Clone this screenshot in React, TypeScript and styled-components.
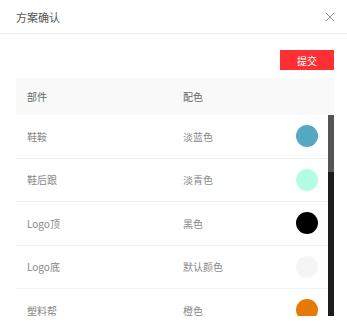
import styled, { createGlobalStyle } from 'styled-components';

// global reset, the dialog fills the page
const GlobalStyle = createGlobalStyle`
  html, body {
    margin: 0;
    padding: 0;
    background: #ffffff;
    font-family: "Noto Sans CJK SC", "Noto Sans", sans-serif;
  }
`;

type Part = { name: string; colorName: string; color: string };

const parts: Part[] = [
  { name: '鞋鞍', colorName: '淡蓝色', color: '#56a8c2' },
  { name: '鞋后跟', colorName: '淡青色', color: '#b3fde2' },
  { name: 'Logo顶', colorName: '黑色', color: '#000000' },
  { name: 'Logo底', colorName: '默认颜色', color: '#f5f5f5' },
  { name: '塑料帮', colorName: '橙色', color: '#e77a06' },
];

const Dialog = styled.div`
  width: 347px;
  height: 326px;
  background: #fff;
  display: flex;
  flex-direction: column;
  overflow: hidden;
`;

const Header = styled.div`
  height: 34px;
  border-bottom: 1px solid #f0f0f0;
  display: flex;
  align-items: center;
  justify-content: space-between;
  padding: 0 12px 0 16px;
  box-sizing: border-box;
`;

const Title = styled.div`
  font-size: 11px;
  color: #555;
`;

const Close = styled.button`
  border: none;
  background: none;
  padding: 0;
  width: 10px;
  height: 10px;
  display: flex;
  cursor: pointer;
`;

const Body = styled.div`
  padding: 16px 13px 0 16px;
  display: flex;
  flex-direction: column;
`;

const Toolbar = styled.div`
  display: flex;
  justify-content: flex-end;
  margin-bottom: 8px;
`;

const SubmitButton = styled.button`
  width: 54px;
  height: 20px;
  border: none;
  background: #ff3033;
  color: #fff;
  font-family: inherit;
  font-size: 10px;
  padding: 0;
  cursor: pointer;
`;

const HeadRow = styled.div`
  display: grid;
  grid-template-columns: 156px 156px 6px;
  height: 37px;
  align-items: center;
  background: #f9f9f9;
  font-size: 10px;
  color: #666;
`;

const Cell = styled.div`
  padding-left: 11px;
  display: flex;
  align-items: center;
  justify-content: space-between;
`;

const ScrollArea = styled.div`
  height: 201px;
  display: flex;
`;

const Rows = styled.div`
  flex: 1;
  overflow: hidden;
`;

const Track = styled.div`
  width: 6px;
  background: #1c1c1c;
  display: flex;
  flex-direction: column;
`;

const Thumb = styled.div`
  height: 57px;
  background: #555;
`;

const Row = styled.div`
  display: grid;
  grid-template-columns: 156px 156px;
  height: 43.5px;
  box-sizing: border-box;
  border-bottom: 1px solid #f2f2f2;
  align-items: center;
  font-size: 10px;
  color: #888;
`;

const Swatch = styled.span<{ $color: string }>`
  width: 22px;
  height: 22px;
  border-radius: 50%;
  background: ${(p) => p.$color};
  margin-right: 10px;
`;

export default function App() {
  return (
    <>
      <GlobalStyle />
      <Dialog>
        <Header>
          <Title>方案确认</Title>
          <Close aria-label="close">
            <svg width="10" height="10" viewBox="0 0 10 10">
              <path d="M1 1 L9 9 M9 1 L1 9" stroke="#999" strokeWidth="1" fill="none" />
            </svg>
          </Close>
        </Header>
        <Body>
          <Toolbar>
            <SubmitButton>提交</SubmitButton>
          </Toolbar>
          <HeadRow>
            <Cell>部件</Cell>
            <Cell>配色</Cell>
          </HeadRow>
          <ScrollArea>
            <Rows>
              {parts.map((p) => (
                <Row key={p.name}>
                  <Cell>{p.name}</Cell>
                  <Cell>
                    {p.colorName}
                    <Swatch $color={p.color} />
                  </Cell>
                </Row>
              ))}
            </Rows>
            <Track>
              <Thumb />
            </Track>
          </ScrollArea>
        </Body>
      </Dialog>
    </>
  );
}
